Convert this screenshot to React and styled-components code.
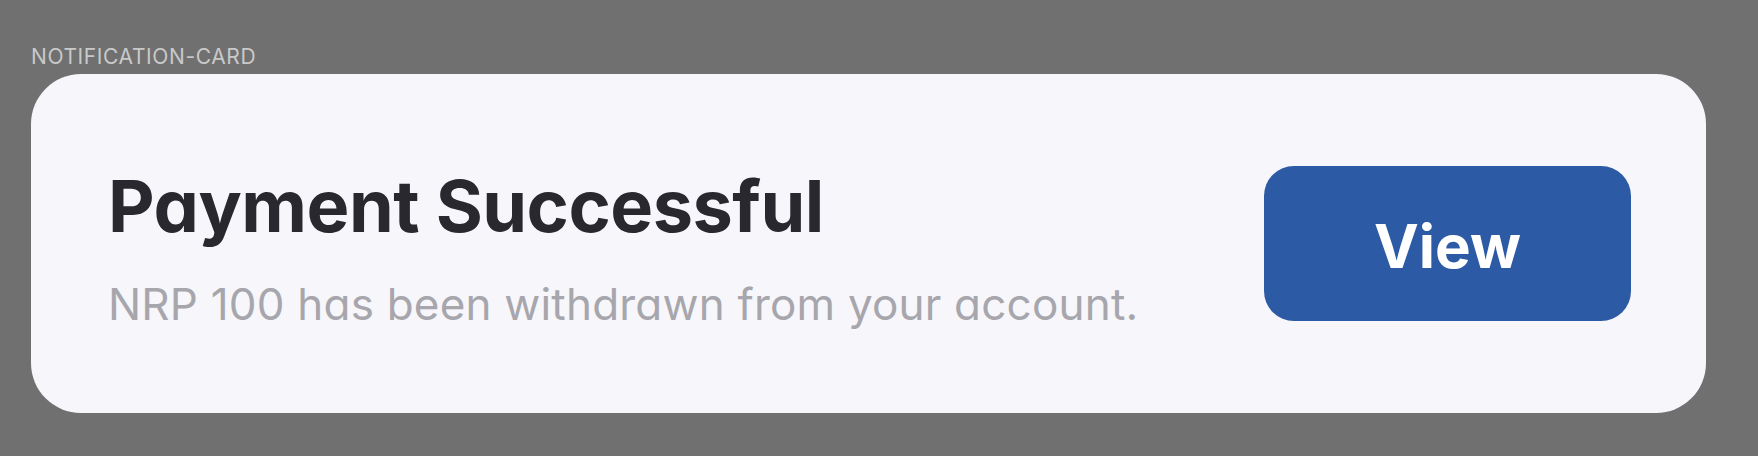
import React from "react";
import styled, { createGlobalStyle } from "styled-components";

const GlobalStyle = createGlobalStyle`
  html, body {
    margin: 0;
    padding: 0;
    background: #707070;
  }
  body {
    font-family: "Inter", "Noto Sans", sans-serif;
    font-feature-settings: "cv11" 1;
  }
`;

const Page = styled.div`
  box-sizing: border-box;
  width: 1758px;
  height: 456px;
  padding: 44px 0 0 31px;
  display: flex;
  flex-direction: column;
`;

const Label = styled.div`
  font-family: "Inter", "Roboto", sans-serif;
  font-size: 21px;
  line-height: 25px;
  color: #c9c9c9;
  letter-spacing: 0.6px;
  margin-bottom: 5px;
`;

const Card = styled.div`
  box-sizing: border-box;
  width: 1675px;
  height: 339px;
  background: #f6f6fb;
  border-radius: 50px;
  display: flex;
  align-items: center;
  justify-content: space-between;
  padding: 0 75px 0 77px;
`;

const TextBlock = styled.div`
  display: flex;
  flex-direction: column;
  gap: 40px;
  padding-top: 9px;
`;

const Title = styled.h2`
  margin: 0;
  font-family: "Inter", sans-serif;
  font-feature-settings: "cv11" 1;
  font-weight: 700;
  font-size: 72px;
  line-height: 72px;
  color: #2a282f;
  letter-spacing: -0.5px;
`;

const Subtitle = styled.p`
  margin: 0;
  font-family: "Inter", sans-serif;
  font-feature-settings: "cv11" 1;
  font-weight: 400;
  font-size: 44px;
  line-height: 44px;
  color: #a7a6ac;
  letter-spacing: 0.2px;
`;

const ViewButton = styled.button`
  box-sizing: border-box;
  width: 367px;
  height: 155px;
  border: none;
  border-radius: 30px;
  background: #2c5aa4;
  color: #ffffff;
  font-family: "Inter", sans-serif;
  font-weight: 700;
  font-size: 60px;
  line-height: 1;
  display: flex;
  align-items: center;
  justify-content: center;
  padding: 4px 0 0;
  cursor: pointer;
`;

export default function App() {
  return (
    <>
      <GlobalStyle />
      <Page>
        <Label>NOTIFICATION-CARD</Label>
        <Card>
          <TextBlock>
            <Title>Payment Successful</Title>
            <Subtitle>NRP 100 has been withdrawn from your account.</Subtitle>
          </TextBlock>
          <ViewButton>View</ViewButton>
        </Card>
      </Page>
    </>
  );
}
